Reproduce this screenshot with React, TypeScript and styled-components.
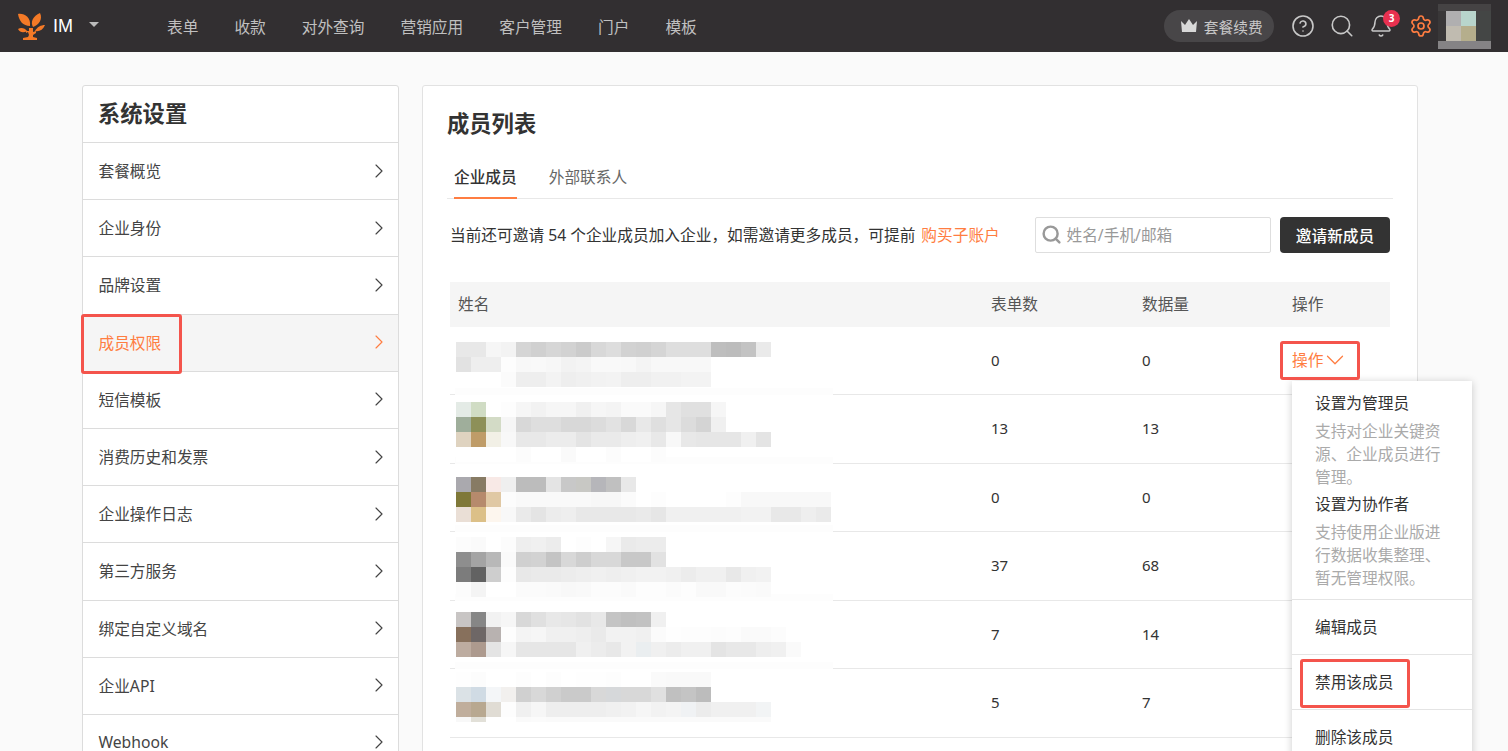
import React from "react";
import styled, { createGlobalStyle } from "styled-components";
import { Bell, ChevronDown, ChevronRight, CircleHelp, Search, Settings } from "lucide-react";

const orange = "#ff7d41";
const markRed = "#f4544c";

const GlobalStyle = createGlobalStyle`
  html, body {
    margin: 0;
    height: 751px;
    overflow: hidden;
    background: #fafafa;
    font-family: "Noto Sans", "Noto Sans CJK SC", sans-serif;
    color: #333;
  }
  * { box-sizing: border-box; }
`;

const Header = styled.header`
  height: 52px;
  background: #322f31;
  display: flex;
  align-items: center;
  padding-left: 18px;
`;

const Brand = styled.div`
  display: flex;
  align-items: center;
  width: 149px;
  color: #fff;
  font: 18px "Liberation Sans", sans-serif;
`;

const BrandName = styled.span`
  margin-left: 8px;
`;

const Caret = styled.span`
  width: 0;
  height: 0;
  margin-left: 16px;
  margin-bottom: 3px;
  border-left: 5px solid transparent;
  border-right: 5px solid transparent;
  border-top: 5px solid #bbb;
`;

const TopNav = styled.nav`
  display: flex;
  gap: 36px;
  color: #c0c0c0;
  font-size: 15.7px;
`;

const HeaderRight = styled.div`
  margin-left: auto;
  display: flex;
  align-items: center;
  height: 100%;
  padding-right: 17px;
`;

const RenewPill = styled.div`
  width: 110px;
  height: 32px;
  padding-left: 5px;
  border-radius: 16px;
  background: #484648;
  color: #c8c8c8;
  font-size: 14.7px;
  display: flex;
  align-items: center;
  justify-content: center;
  gap: 7px;
  margin-right: 16.5px;
`;

const HeaderIcon = styled.span<{ $gap: number }>`
  position: relative;
  display: flex;
  margin-right: ${(p) => p.$gap}px;
`;

const Badge = styled.span`
  position: absolute;
  top: -4.5px;
  left: 14px;
  width: 17px;
  height: 17px;
  border-radius: 50%;
  background: #e8304f;
  color: #fff;
  font-size: 10px;
  font-weight: 700;
  display: flex;
  align-items: center;
  justify-content: center;
`;

const Avatar = styled.svg`
  display: block;
  shape-rendering: crispEdges;
`;

const Page = styled.div`
  display: flex;
  align-items: flex-start;
  gap: 23px;
  padding: 33px 0 0 82px;
`;

const Sidebar = styled.aside`
  position: relative;
  width: 317px;
  flex: none;
  background: #fff;
  border: 1px solid #dcdcdc;
  border-radius: 3px;
`;

const SideTitle = styled.h2`
  margin: 0;
  height: 56px;
  padding-left: 15px;
  font-size: 22.3px;
  line-height: 56px;
  font-weight: 700;
  color: #333;
`;

const SideItem = styled.div<{ $active?: boolean }>`
  height: 57.2px;
  display: flex;
  align-items: center;
  justify-content: space-between;
  padding: 0 7px 1px 15.5px;
  border-top: 1px solid #dcdcdc;
  font-size: 15.7px;
  background: ${(p) => (p.$active ? "#f5f5f5" : "#fff")};
  color: ${(p) => (p.$active ? orange : "#444")};
`;

const Main = styled.main`
  width: 996px;
  flex: none;
  background: #fff;
  border: 1px solid #e2e2e2;
  border-radius: 3px;
  padding: 0 24px;
  height: 800px;
`;

const MainTitle = styled.h1`
  margin: 0;
  padding-top: 21px;
  height: 67px;
  font-size: 22.3px;
  line-height: 34px;
  font-weight: 700;
  color: #333;
`;

const Tabs = styled.div`
  display: flex;
  height: 46px;
  padding-left: 7px;
  gap: 32px;
  border-bottom: 1px solid #e8e8e8;
`;

const Tab = styled.div<{ $active?: boolean }>`
  height: 46px;
  line-height: 48px;
  font-size: 15.7px;
  color: ${(p) => (p.$active ? "#333" : "#666")};
  font-weight: ${(p) => (p.$active ? 500 : 400)};
  border-bottom: ${(p) => (p.$active ? `2px solid ${orange}` : "none")};
`;

const Toolbar = styled.div`
  display: flex;
  align-items: center;
  margin: 18px 3px 29px;
  height: 36px;
`;

const InviteNote = styled.div`
  flex: 1;
  font-size: 15.7px;
  color: #333;
  padding-bottom: 2px;
`;

const BuyLink = styled.span`
  color: ${orange};
  margin-left: 6px;
`;

const SearchBox = styled.div`
  width: 236px;
  height: 36px;
  border: 1px solid #dedede;
  border-radius: 2px;
  display: flex;
  align-items: center;
  gap: 5px;
  padding: 0 0 1px 4.5px;
  font-size: 15.7px;
  color: #999;
  margin-right: 9px;
`;

const InviteButton = styled.button`
  width: 110px;
  height: 36px;
  border: none;
  border-radius: 4px;
  background: #333;
  color: #fff;
  font: 500 15.7px "Noto Sans", "Noto Sans CJK SC", sans-serif;
`;

const Table = styled.div`
  margin: 0 3px;
  position: relative;
`;

const HeadRow = styled.div`
  display: grid;
  grid-template-columns: 533px 151px 150px 1fr;
  height: 45px;
  align-items: center;
  background: #f5f5f5;
  font-size: 15.7px;
  color: #555;
  padding: 0 0 2px 8px;
`;

const BodyRow = styled.div<{ $height: number }>`
  position: relative;
  display: grid;
  grid-template-columns: 533px 151px 150px 1fr;
  height: ${(p) => p.$height}px;
  align-items: center;
  padding: 0 0 2px 8px;
  font-size: 15px;
  color: #333;
  border-bottom: 1px solid #e8e8e8;
`;

const Mosaic = styled.svg<{ $top: number }>`
  position: absolute;
  left: 5px;
  top: ${(p) => p.$top}px;
  display: block;
  shape-rendering: crispEdges;
`;

// the blur of the name column also washes out the row line under it
const LineCover = styled.div`
  position: absolute;
  left: 5px;
  bottom: -1px;
  width: 378px;
  height: 7px;
  background: #fdfdfd;
`;

const ActionCell = styled.div`
  display: flex;
  align-items: center;
  color: ${orange};
  font-size: 15.7px;
`;

const ActionChevron = styled(ChevronDown)`
  margin-left: -3px;
`;

const Dropdown = styled.div`
  position: absolute;
  left: 842px;
  top: 99px;
  width: 180px;
  height: 400px;
  background: #fff;
  box-shadow: 0 1px 8px rgba(0, 0, 0, 0.2);
  color: #333;
`;

const RoleBlock = styled.div`
  height: 218.5px;
  padding: 11px 29px 0 23px;
  border-bottom: 1px solid #e4e4e4;
`;

const RoleName = styled.div`
  font-size: 15.7px;
  line-height: 23px;
  white-space: nowrap;
`;

const RoleDesc = styled.div`
  font-size: 15.7px;
  line-height: 23px;
  color: #aaa;
  margin: 5px 0 4px;
`;

const MenuItem = styled.div`
  height: 55px;
  padding-left: 23px;
  display: flex;
  align-items: center;
  font-size: 15.7px;
  border-bottom: 1px solid #e4e4e4;
`;

const Mark = styled.div<{ $left: number; $top: number; $w: number; $h: number }>`
  position: absolute;
  left: ${(p) => p.$left}px;
  top: ${(p) => p.$top}px;
  width: ${(p) => p.$w}px;
  height: ${(p) => p.$h}px;
  border: 3px solid ${markRed};
  border-radius: 3px;
  pointer-events: none;
`;

const Overlay = styled.div`
  position: absolute;
  inset: 0;
  pointer-events: none;
`;

function Logo() {
  return (
    <svg width="27" height="27" viewBox="0 0 27 27" fill="#f47a27">
      <path d="M0 1 C6 0 13 4 12 13 C5 13 1 8 0 1Z" />
      <path d="M22 0 C25 6 21 12 15 14 C12 9 15 3 22 0Z" />
      <path d="M27 12 C25 17 21 19 17 18 C19 14 23 12 27 12Z" />
      <path d="M0 16 C3 14 7 15 9 18 C6 20 2 20 0 16Z" />
      <path d="M11 15 L15 15 L15 19 L18 18 L18 20 L15 22 L15 24 L19 25 L19 27 L5 27 L5 25 L10 24 L11 22 L10 19 L8 20 L8 18 L11 18Z" />
    </svg>
  );
}

function Crown() {
  return (
    <svg width="16" height="14" viewBox="0 0 16 14" fill="#d8d8d8">
      <path d="M0 2 L4 6 L8 0 L12 6 L16 2 L15 13 L1 13Z" />
    </svg>
  );
}

// blurred avatar in the top bar
const avatarCells: [number, number, number, number, string][] = [
  [0, 0, 53, 7, "#454344"],
  [0, 7, 8, 30, "#393738"],
  [8, 7, 15, 15, "#b0afb0"],
  [23, 7, 15, 15, "#b8d5cc"],
  [38, 7, 15, 30, "#444645"],
  [8, 22, 15, 15, "#c0bbb0"],
  [23, 22, 15, 15, "#b5ae8c"],
  [0, 37, 53, 8, "#858385"],
];

// each row of the member table is a pixelated avatar + name + mail, 15px cells
const g = (v: string) => "#" + v + v + v;
const mosaics: { top: number; height?: number; lines: string[][] }[] = [
  {
    top: 15,
    lines: [
      ["e8", "e8", "f6", "f3", "d5", "d0", "d6", "d2", "cb", "d8", "dd", "d2", "d0", "d5", "de", "de", "de", "be", "bc", "c3", "ea"].map(g),
      ["e2", "ee", "ee", "fd", "f8", "f9", "f7", "f2", "f4", "f9", "f9", "f8", "f4", "f8", "f8", "f8", "f8"].map(g),
      ["ff", "ff", "ff", "fb", "ee", "ee", "f3", "ee", "f0", "f2", "f3", "ee", "ee", "f1", "f1", "f3", "f3"].map(g),
    ],
  },
  {
    top: 7,
    lines: [
      ["#e4ebe6", "#d0dcc4", "#ffffff", "#fdfdfd", "#f6f6f6", "#f2f2f2", "#f6f6f6", "#f6f6f6", "#f0f0f0", "#f6f6f6", "#f4f4f4", "#fafafa", "#fafafa", "#f6f6f6", "#e6e6e6", "#e0e0e0", "#e0e0e0", "#f6f6f6"],
      ["#9fae9b", "#8d9058", "#d3dbc6", "#f6f6f6", "#d8d8d8", "#dedede", "#dedede", "#d8d8d8", "#d8d8d8", "#dcdcdc", "#e2e2e2", "#d8d8d8", "#e8e8e8", "#dfdfdf", "#e6e6e6", "#dcdcdc", "#d4d4d4", "#f0f0f0"],
      ["#dfd3c0", "#bf9c68", "#f2f0e6", "#f8f8f8", "#e8e8e8", "#e8e8e8", "#ececec", "#ececec", "#e4e4e4", "#eaeaea", "#eaeaea", "#eeeeee", "#f0f0f0", "#e8e8e8", "#f8f8f8", "#e8e8e8", "#e6e6e6", "#e6e6e6", "#e6e6e6", "#f0f0f0", "#e4e4e4"],
      ["#ffffff", "#ffffff", "#ffffff", "#ffffff", "#fcfcfc", "#ffffff", "#ffffff", "#fafafa", "#ffffff", "#ffffff", "#fcfcfc", "#ffffff", "#ffffff", "#fcfcfc"],
    ],
  },
  {
    top: 13,
    lines: [
      ["#aaa9ae", "#877b64", "#f8e9e6", "#efefef", "#bcbcbc", "#bcbcbc", "#e4e4e4", "#c8c8c8", "#c8c8c4", "#b6b6ba", "#c0c0c0", "#e8e8e8"],
      ["#7f7838", "#b68a6c", "#e0c8a4", "#fcfcfc", "#f9f9f9", "#f9f9f9", "#f9f9f9", "#f9f9f9", "#f9f9f9", "#f7f7f7", "#f7f7f7", "#fbfbfb", "#ffffff", "#fdfdfd", "#ffffff", "#ffffff", "#ffffff", "#ffffff", "#fdfdfd", "#f8f8f8", "#f8f8f8", "#f8f8f8", "#f8f8f8", "#f8f8f8", "#f8f8f8"],
      ["#eadfd6", "#dcc088", "#fdf6ee", "#f8f8f8", "#eaeaea", "#e4e4e4", "#ececec", "#eeeeee", "#e8e8e8", "#e8e8e8", "#e8e8e8", "#e8e8e8", "#eaeaea", "#e6e6e6", "#f0f0f0", "#f0f0f0", "#f0f0f0", "#f0f0f0", "#f0f0f0", "#f2f2f2", "#f2f2f2", "#e8e8e8", "#e8e8e8", "#eeeeee", "#eaeaea"],
    ],
  },
  {
    top: 5,
    lines: [
      ["fc", "fa", "ff", "fc", "ee", "f0", "ec", "ff", "fd", "ff", "f6", "ea", "ec", "ec"].map(g),
      ["8e", "a4", "b8", "fa", "d0", "d2", "c4", "d8", "ce", "d8", "d8", "c8", "c8", "e2"].map(g),
      ["7c", "62", "ce", "fd", "e8", "ea", "ea", "ec", "ee", "f0", "ee", "f0", "f2", "f2", "f0", "ec", "f0", "f0", "e8", "f0", "f2"].map(g),
      ["fc", "f4", "ff", "ff", "fb", "fb", "fa", "f8", "f9", "fc", "fc", "fa", "fd", "fd", "fb", "fd", "f9", "f9", "fc", "fb", "fa"].map(g),
    ],
  },
  {
    top: 11,
    lines: [
      ["#c8c5c4", "#868686", "#f2f2f2", "#f6f6f6", "#d8d8d8", "#e0e0e0", "#e8e8e8", "#e6e6e6", "#e2e2e2", "#e8e8e8", "#c4c4c4", "#c0c0c0", "#c2c2c2", "#f0f0f0"],
      ["#87705c", "#6e6766", "#b8b2b0", "#fdfdfd", "#f4f4f4", "#f6f6f6", "#f0f0f0", "#f0f0f0", "#eeeeee", "#eaeaea", "#f2f2f2", "#f2f2f2", "#f0f0f0", "#fbfbfb", "#fefefe", "#fdfdfd", "#fdfdfd", "#fcfcfc", "#fdfdfd", "#fafafa", "#fafafa", "#fcfcfc"],
      ["#bdaca0", "#ad9a8e", "#e4e4e4", "#f6f6f6", "#e6e6e6", "#e6e6e6", "#e6e6e6", "#e6e6e6", "#f0f0f0", "#ececec", "#e8e8e8", "#f2f2f2", "#eaeef0", "#f0f0f0", "#ececec", "#f0f0f0", "#f0f0f0", "#e4e4e4", "#e8e8e8", "#e8e8e8", "#eeeeee", "#f0f0f0", "#fafafa"],
    ],
  },
  {
    top: 3,
    height: 50,
    lines: [
      ["#fefefe", "#fcfcfc", "#ffffff", "#ffffff", "#fdfdfd", "#ffffff", "#fdfdfd", "#ffffff", "#fefefe", "#fefefe", "#fdfdfd", "#ffffff", "#ffffff", "#fafafa", "#f9f9f9", "#f9f9f9", "#f9f9f9"],
      ["#dbe2e6", "#d0dbe4", "#f4f6f8", "#f2f0ee", "#d0d0d0", "#d8d8d8", "#d0d0d0", "#cacaca", "#cacaca", "#d8d8d8", "#d6d8da", "#d8d8d8", "#d8d8d8", "#e0e0e0", "#c0c0c0", "#c4c4c4", "#bcbcbc"],
      ["#c0ae9c", "#b8a890", "#e0dcd4", "#fdfdfd", "#f0f0f0", "#f6f6f6", "#eeeeee", "#eeeeee", "#eeeeee", "#eeeeee", "#f0f0f0", "#f2f2f2", "#f6f6f6", "#f2f2f2", "#f4f4f4", "#f0f2f4", "#ececec", "#f0f0f0", "#f0f0f0", "#f0f0f0", "#f2f4f5"],
      ["#f8f8f8", "#e2e0d8", "#ffffff", "#ffffff", "#fafafa", "#fbfbfb", "#fafafa", "#fafafa", "#fafafa", "#fafafa", "#fafafa", "#fafafa", "#fafafa", "#fafafa", "#fafafa", "#fafafa", "#fafafa", "#fafafa", "#fafafa", "#fafafa", "#fafafa"],
    ],
  },
];

const sideItems = ["套餐概览", "企业身份", "品牌设置", "成员权限", "短信模板", "消费历史和发票", "企业操作日志", "第三方服务", "绑定自定义域名", "企业API", "Webhook"];
const navItems = ["表单", "收款", "对外查询", "营销应用", "客户管理", "门户", "模板"];
const rows = [
  { forms: 0, data: 0, height: 68 },
  { forms: 13, data: 13, height: 69 },
  { forms: 0, data: 0, height: 68 },
  { forms: 37, data: 68, height: 69 },
  { forms: 7, data: 14, height: 68 },
  { forms: 5, data: 7, height: 69 },
];

export default function App() {
  return (
    <>
      <GlobalStyle />
      <Header>
        <Brand>
          <Logo />
          <BrandName>IM</BrandName>
          <Caret />
        </Brand>
        <TopNav>
          {navItems.map((n) => (
            <span key={n}>{n}</span>
          ))}
        </TopNav>
        <HeaderRight>
          <RenewPill>
            <Crown />
            套餐续费
          </RenewPill>
          <HeaderIcon $gap={14.3}>
            <CircleHelp size={24} color="#c8c8c8" strokeWidth={1.6} />
          </HeaderIcon>
          <HeaderIcon $gap={14}>
            <Search size={26} color="#c8c8c8" strokeWidth={1.5} />
          </HeaderIcon>
          <HeaderIcon $gap={15.5}>
            <Bell size={24} color="#c8c8c8" strokeWidth={1.5} />
            <Badge>3</Badge>
          </HeaderIcon>
          <HeaderIcon $gap={5.5}>
            <Settings size={24} color={orange} strokeWidth={1.7} />
          </HeaderIcon>
          <Avatar width="53" height="45" viewBox="0 0 53 45">
            {avatarCells.map(([x, y, w, h, c], i) => (
              <rect key={i} x={x} y={y} width={w} height={h} fill={c} />
            ))}
          </Avatar>
        </HeaderRight>
      </Header>
      <Page>
        <Sidebar>
          <SideTitle>系统设置</SideTitle>
          {sideItems.map((s) => (
            <SideItem key={s} $active={s === "成员权限"}>
              {s}
              <ChevronRight size={24} strokeWidth={1.15} color={s === "成员权限" ? orange : "#444"} />
            </SideItem>
          ))}
          <Overlay>
            <Mark $left={-2} $top={228} $w={101} $h={60} />
          </Overlay>
        </Sidebar>
        <Main>
          <MainTitle>成员列表</MainTitle>
          <Tabs>
            <Tab $active>企业成员</Tab>
            <Tab>外部联系人</Tab>
          </Tabs>
          <Toolbar>
            <InviteNote>
              当前还可邀请 54 个企业成员加入企业，如需邀请更多成员，可提前<BuyLink>购买子账户</BuyLink>
            </InviteNote>
            <SearchBox>
              <Search size={21} color="#999" strokeWidth={2.8} />
              姓名/手机/邮箱
            </SearchBox>
            <InviteButton>邀请新成员</InviteButton>
          </Toolbar>
          <Table>
            <HeadRow>
              <span>姓名</span>
              <span>表单数</span>
              <span>数据量</span>
              <span>操作</span>
            </HeadRow>
            {rows.map((r, i) => {
              const h = mosaics[i].height ?? 60;
              return (
                <BodyRow key={i} $height={r.height}>
                  <span />
                  <span>{r.forms}</span>
                  <span>{r.data}</span>
                  {i === 0 ? (
                    <ActionCell>
                      操作
                      <ActionChevron size={30} strokeWidth={1} />
                    </ActionCell>
                  ) : (
                    <span />
                  )}
                  {i < rows.length - 1 && <LineCover />}
                  <Mosaic $top={mosaics[i].top} width="378" height={h} viewBox={`0 0 378 ${h}`}>
                    {mosaics[i].lines.map((line, ly) =>
                      line.map((c, lx) => <rect key={`${ly}-${lx}`} x={lx * 15 + 1} y={ly * 15} width="15" height="15" fill={c} />)
                    )}
                  </Mosaic>
                </BodyRow>
              );
            })}
            <Dropdown>
              <RoleBlock>
                <RoleName>设置为管理员</RoleName>
                <RoleDesc>支持对企业关键资源、企业成员进行管理。</RoleDesc>
                <RoleName>设置为协作者</RoleName>
                <RoleDesc>支持使用企业版进行数据收集整理、暂无管理权限。</RoleDesc>
              </RoleBlock>
              <MenuItem>编辑成员</MenuItem>
              <MenuItem>禁用该成员</MenuItem>
              <MenuItem>删除该成员</MenuItem>
            </Dropdown>
            <Mark $left={830} $top={59} $w={80} $h={39} />
            <Mark $left={850} $top={377} $w={110} $h={49} />
          </Table>
        </Main>
      </Page>
    </>
  );
}
